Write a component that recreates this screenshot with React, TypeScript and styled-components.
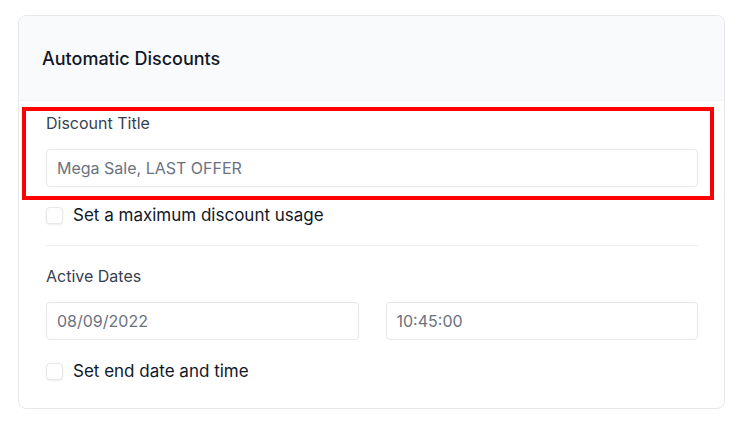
import React from 'react';
import styled, { createGlobalStyle } from 'styled-components';

const GlobalStyle = createGlobalStyle`
    body {
        margin: 0;
        background: #ffffff;
        font-family: Inter, "Noto Sans", sans-serif;
    }
`;

const Page = styled.div`
    padding: 15px 15px 0 18px;
    width: 740px;
    box-sizing: border-box;
`;

const Card = styled.div`
    width: 707px;
    box-sizing: border-box;
    border: 1px solid #e5e7eb;
    border-radius: 8px;
    background: #ffffff;
    overflow: hidden;
`;

const CardHeader = styled.div`
    height: 84px;
    display: flex;
    align-items: center;
    padding: 0 23px;
    background: #f9fafb;
    border-bottom: 1px solid #f3f4f6;
`;

const Title = styled.h2`
    margin: 0;
    font-size: 18px;
    font-weight: 500;
    color: #111827;
`;

const CardBody = styled.div`
    padding: 12px 26px 25px 27px;
    display: flex;
    flex-direction: column;
`;

const FieldGroup = styled.div`
    position: relative;
    display: flex;
    flex-direction: column;
`;

// red annotation box drawn over the title field
const Highlight = styled.div`
    position: absolute;
    left: -24px;
    right: -16px;
    top: -6px;
    bottom: -13px;
    border: 4px solid #ff0000;
    pointer-events: none;
`;

const Label = styled.label`
    font-size: 16px;
    line-height: 20px;
    color: #374151;
    margin-bottom: 16px;
`;

const Input = styled.input`
    height: 38px;
    width: 100%;
    box-sizing: border-box;
    border: 1px solid #e5e7eb;
    border-radius: 4px;
    padding: 0 10px;
    font-family: inherit;
    font-size: 16px;
    color: #6b7280;
    background: #ffffff;
    outline: none;
    &::placeholder {
        color: #6b7280;
    }
`;

const DateRow = styled.div`
    display: grid;
    grid-template-columns: 1fr 1fr;
    column-gap: 27px;
`;

const CheckRow = styled.label<{ $top: number }>`
    display: flex;
    align-items: center;
    gap: 10px;
    margin-top: ${(p) => p.$top}px;
    line-height: 24px;
    font-size: 17px;
    color: #111827;
`;

const Box = styled.span`
    width: 17px;
    height: 17px;
    box-sizing: border-box;
    border: 1px solid #e5e7eb;
    border-radius: 4px;
    background: #ffffff;
    box-shadow: 0 1px 2px rgba(0, 0, 0, 0.08);
`;

const Divider = styled.hr`
    border: 0;
    border-top: 1px solid #f0f0f0;
    margin: 18px 0 20px;
`;

const App: React.FC = () => {
    return (
        <Page>
            <GlobalStyle />
            <Card>
                <CardHeader>
                    <Title>Automatic Discounts</Title>
                </CardHeader>
                <CardBody>
                    <FieldGroup>
                        <Highlight />
                        <Label>Discount Title</Label>
                        <Input placeholder="Mega Sale, LAST OFFER" />
                    </FieldGroup>
                    <CheckRow $top={16}>
                        <Box />
                        Set a maximum discount usage
                    </CheckRow>
                    <Divider />
                    <Label>Active Dates</Label>
                    <DateRow>
                        <Input defaultValue="08/09/2022" />
                        <Input defaultValue="10:45:00" />
                    </DateRow>
                    <CheckRow $top={19}>
                        <Box />
                        Set end date and time
                    </CheckRow>
                </CardBody>
            </Card>
        </Page>
    );
};

export default App;
